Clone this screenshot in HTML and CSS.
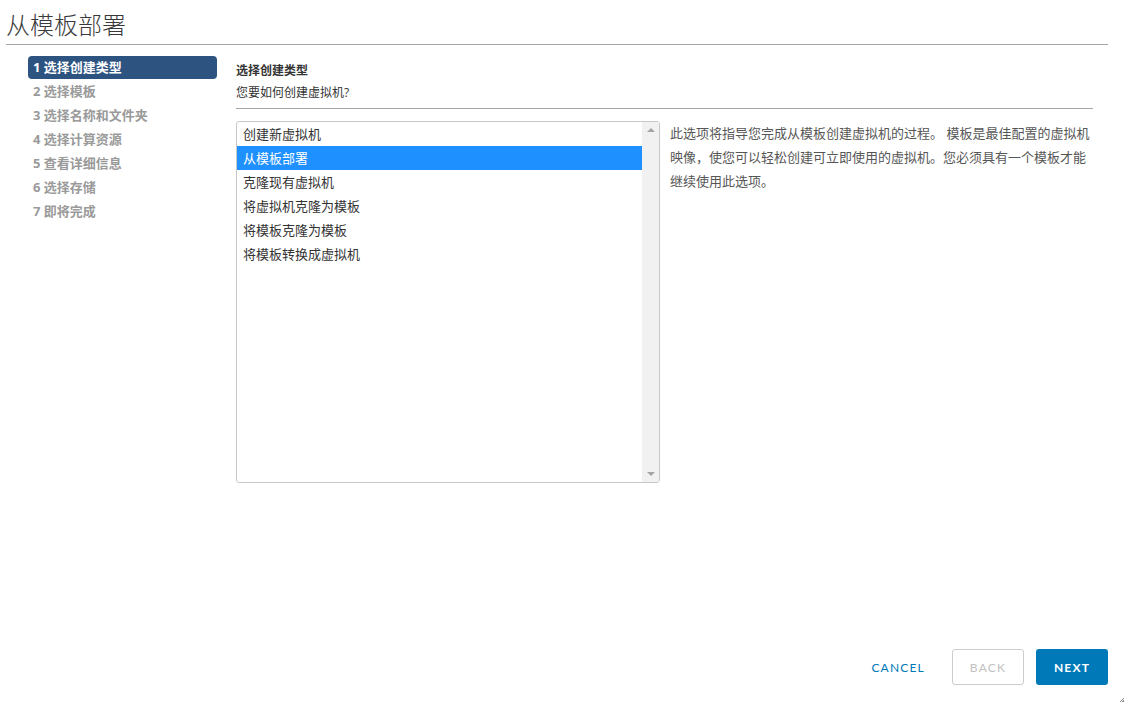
FILE: index.html
```html
<!DOCTYPE html>
<html lang="zh-CN">
<head>
  <meta charset="UTF-8">
  <title>从模板部署</title>
  <link rel="stylesheet" href="styles.css">
</head>
<body>
  <div class="modal">
    <h1 class="title">从模板部署</h1>
    <div class="wizard">
      <ul class="steps">
        <li class="step active">1 选择创建类型</li>
        <li class="step">2 选择模板</li>
        <li class="step">3 选择名称和文件夹</li>
        <li class="step">4 选择计算资源</li>
        <li class="step">5 查看详细信息</li>
        <li class="step">6 选择存储</li>
        <li class="step">7 即将完成</li>
      </ul>
      <div class="page">
        <div class="page-head">
          <div class="page-title">选择创建类型</div>
          <div class="page-sub">您要如何创建虚拟机?</div>
        </div>
        <div class="page-body">
          <div class="listbox">
            <ul class="options">
              <li>创建新虚拟机</li>
              <li class="selected">从模板部署</li>
              <li>克隆现有虚拟机</li>
              <li>将虚拟机克隆为模板</li>
              <li>将模板克隆为模板</li>
              <li>将模板转换成虚拟机</li>
            </ul>
            <div class="scrollbar">
              <span class="arrow up"></span>
              <span class="arrow down"></span>
            </div>
          </div>
          <p class="desc">此选项将指导您完成从模板创建虚拟机的过程。 模板是最佳配置的虚拟机映像，使您可以轻松创建可立即使用的虚拟机。您必须具有一个模板才能继续使用此选项。</p>
        </div>
      </div>
    </div>
    <div class="footer">
      <button class="btn btn-link">CANCEL</button>
      <button class="btn btn-outline" disabled>BACK</button>
      <button class="btn btn-primary">NEXT</button>
    </div>
    <div class="resize"></div>
  </div>
</body>
</html>
```
FILE: styles.css
```css
body {
  margin: 0;
  background: #fff;
  font-family: "Open Sans", "Noto Sans CJK SC", sans-serif;
  color: #333;
}
.modal {
  position: relative;
  height: 704px;
  display: flex;
  flex-direction: column;
}
.title {
  margin: 0 18px 0 6px;
  height: 45px;
  box-sizing: border-box;
  padding-top: 8px;
  font-size: 24px;
  font-weight: 300;
  line-height: 32px;
  color: #3a3a3a;
  border-bottom: 1px solid #a6a6a6;
  font-family: "Noto Sans CJK SC", sans-serif;
}
.wizard {
  flex: 1;
  display: flex;
  padding: 11px 33px 0 28px;
}
.steps {
  list-style: none;
  margin: 0;
  padding: 0;
  width: 189px;
  flex: none;
}
.step {
  height: 24px;
  line-height: 22px;
  padding-left: 5px;
  font-size: 13px;
  font-weight: bold;
  color: #9a9a9a;
}
.step.active {
  height: 23px;
  line-height: 22px;
  margin-bottom: 1px;
  background: #2d5481;
  color: #fff;
  border-radius: 4px;
}
.page {
  flex: 1;
  margin-left: 19px;
}
.page-head {
  border-bottom: 1px solid #a6a6a6;
  padding-bottom: 6px;
}
.page-title {
  font-size: 12px;
  font-weight: bold;
  line-height: 18px;
  padding-top: 6px;
  color: #333;
}
.page-sub {
  font-size: 12px;
  line-height: 18px;
  margin-top: 4px;
  color: #333;
}
.page-body {
  display: flex;
  margin-top: 12px;
}
.listbox {
  width: 422px;
  height: 360px;
  border: 1px solid #c8c8c8;
  border-radius: 3px;
  display: flex;
  flex: none;
}
.options {
  list-style: none;
  margin: 0;
  padding: 0;
  flex: 1;
}
.options li {
  height: 24px;
  line-height: 24px;
  padding-left: 6px;
  font-size: 13px;
  color: #333;
}
.options li.selected {
  background: #1e90ff;
  color: #fff;
}
.scrollbar {
  width: 17px;
  background: #f1f1f1;
  display: flex;
  flex-direction: column;
  justify-content: space-between;
  align-items: center;
  padding: 6px 0;
}
.arrow {
  width: 0;
  height: 0;
  border-left: 4px solid transparent;
  border-right: 4px solid transparent;
}
.arrow.up {
  border-bottom: 4px solid #a3a3a3;
}
.arrow.down {
  border-top: 4px solid #a3a3a3;
}
.desc {
  margin: 0 0 0 10px;
  font-size: 13px;
  line-height: 24px;
  color: #565656;
}
.footer {
  display: flex;
  justify-content: flex-end;
  align-items: center;
  gap: 12px;
  padding: 0 18px 19px 0;
}
.btn {
  height: 36px;
  min-width: 72px;
  padding: 0 12px;
  font-family: "Lato", "Open Sans", sans-serif;
  font-size: 12px;
  font-weight: bold;
  letter-spacing: 1.2px;
  border-radius: 3px;
  border: 1px solid transparent;
  background: none;
}
.btn-link {
  color: #0079b8;
  font-weight: normal;
  margin-right: 2px;
}
.btn-outline {
  border-color: #ccc;
  color: #c2c2c2;
  font-weight: normal;
}
.btn-primary {
  background: #0079b8;
  color: #fff;
}
.resize {
  position: absolute;
  right: 2px;
  bottom: 2px;
  width: 6px;
  height: 6px;
  background: repeating-linear-gradient(135deg, transparent 0 1px, #888 1px 2px);
  clip-path: polygon(100% 0, 100% 100%, 0 100%);
}
```
